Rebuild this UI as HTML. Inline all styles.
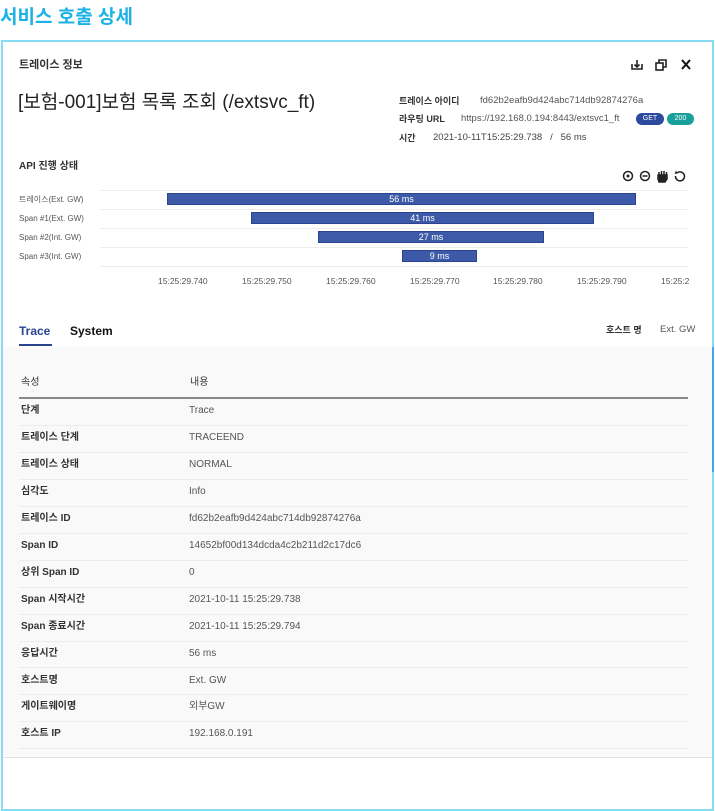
<!DOCTYPE html>
<html><head><meta charset="utf-8">
<style>
*{margin:0;padding:0;box-sizing:border-box}
body{width:715px;height:811px;background:#fff;position:relative;overflow:hidden;font-family:"Liberation Sans","Noto Sans CJK KR",sans-serif;color:#222}
.a{position:absolute;white-space:nowrap}
.k{font-weight:bold;font-size:10px;color:#333;line-height:12px}
.v{font-size:10px;color:#555;line-height:12px}
.row{position:absolute;left:19px;width:669px;height:1px;background:#ececec}
.grid{position:absolute;left:100px;width:588px;height:1px;background:#ececec}
.bar{position:absolute;height:12px;background:#3c5aa8;border:1px solid #2a4490;color:#fff;font-size:9px;text-align:center;line-height:10px}
.lab{font-size:8px;color:#555;line-height:10px}
.ax{font-size:8.5px;color:#555;top:276px}
</style></head><body>
<div class="a" style="left:0;top:2px;font-size:19px;font-weight:bold;color:#1db2e6">서비스 호출 상세</div>
<div class="a" style="left:1px;top:40px;width:713px;height:771px;border:2px solid #86dcf4"></div>
<div class="a" style="left:3px;top:347px;width:709px;height:410px;background:#f9f9f9"></div>
<div class="a" style="left:3px;top:757px;width:709px;height:1px;background:#e2e2e2"></div>
<div class="a" style="left:712px;top:347px;width:2px;height:125px;background:#4aa3e0"></div>

<div class="a k" style="left:19px;top:59px;font-size:11px">트레이스 정보</div>
<svg class="a" style="left:629px;top:58px" width="64" height="14" viewBox="0 0 64 14">
<path d="M3 6v5h10V6M8 2v7M5.5 6.5L8 9l2.5-2.5" fill="none" stroke="#222" stroke-width="1.6"/>
<rect x="27" y="5" width="7" height="7" fill="none" stroke="#222" stroke-width="1.6"/>
<path d="M30 5V2h7v7h-3" fill="none" stroke="#222" stroke-width="1.6"/>
<path d="M53 2l8 9M61 2l-8 9" stroke="#111" stroke-width="2"/>
</svg>
<div class="a" style="left:18px;top:90px;font-size:19px;color:#222;line-height:26px">[보험-001]보험 목록 조회 (/extsvc_ft)</div>
<div class="a k" style="left:399px;top:95px;font-size:9px">트레이스 아이디</div>
<div class="a v" style="left:480px;top:95px;font-size:9.5px">fd62b2eafb9d424abc714db92874276a</div>
<div class="a k" style="left:399px;top:113px;font-size:9px">라우팅 URL</div>
<div class="a v" style="left:461px;top:113px;font-size:9.5px">https://192.168.0.194:8443/extsvc1_ft</div>
<div class="a" style="left:636px;top:113px;width:28px;height:12px;border-radius:6px;background:#2c4a9e;color:#fff;font-size:7px;text-align:center;line-height:12px">GET</div>
<div class="a" style="left:667px;top:113px;width:27px;height:12px;border-radius:6px;background:#1aa09a;color:#fff;font-size:7px;text-align:center;line-height:12px">200</div>
<div class="a k" style="left:399px;top:132px;font-size:9px">시간</div>
<div class="a v" style="left:433px;top:132px;font-size:9.5px;color:#444">2021-10-11T15:25:29.738 &nbsp; / &nbsp; 56 ms</div>

<div class="a k" style="left:19px;top:161px;font-size:10px">API 진행 상태</div>
<svg class="a" style="left:622px;top:169px" width="66" height="14" viewBox="0 0 66 14">
<circle cx="6" cy="7" r="4.5" fill="none" stroke="#222" stroke-width="1.5"/><circle cx="6" cy="7" r="1.5" fill="#222"/>
<circle cx="23" cy="7" r="4.5" fill="none" stroke="#222" stroke-width="1.5"/><path d="M20.5 7h5" stroke="#222" stroke-width="1.5"/>
<path d="M36 6h9v4l-2 3h-6l-1-3z M37 3v4M39.5 2v5M42 2v5M44.5 3v4" fill="#222" stroke="#222" stroke-width="1.5"/>
<path d="M55 4a4.5 4.5 0 1 1-1.5 3" fill="none" stroke="#222" stroke-width="1.5"/><path d="M54 1.5l1.5 3-3 0.5z" fill="#222"/>
</svg>

<div class="grid" style="top:190px"></div><div class="grid" style="top:209px"></div><div class="grid" style="top:228px"></div><div class="grid" style="top:247px"></div><div class="grid" style="top:266px"></div>
<div class="a lab" style="left:19px;top:195px">트레이스(Ext. GW)</div>
<div class="a lab" style="left:19px;top:214px">Span #1(Ext. GW)</div>
<div class="a lab" style="left:19px;top:233px">Span #2(Int. GW)</div>
<div class="a lab" style="left:19px;top:252px">Span #3(Int. GW)</div>
<div class="bar a" style="left:167px;top:193px;width:469px">56 ms</div>
<div class="bar a" style="left:251px;top:212px;width:343px">41 ms</div>
<div class="bar a" style="left:318px;top:231px;width:226px">27 ms</div>
<div class="bar a" style="left:402px;top:250px;width:75px">9 ms</div>
<div class="a ax" style="left:158px">15:25:29.740</div>
<div class="a ax" style="left:242px">15:25:29.750</div>
<div class="a ax" style="left:326px">15:25:29.760</div>
<div class="a ax" style="left:410px">15:25:29.770</div>
<div class="a ax" style="left:493px">15:25:29.780</div>
<div class="a ax" style="left:577px">15:25:29.790</div>
<div class="a ax" style="left:661px">15:25:2</div>

<div class="a" style="left:19px;top:324px;font-size:12px;font-weight:bold;color:#2a4490">Trace</div>
<div class="a" style="left:70px;top:324px;font-size:12px;font-weight:bold;color:#111">System</div>
<div class="a" style="left:19px;top:344px;width:33px;height:2px;background:#2a4490"></div>
<div class="a k" style="left:606px;top:324px;font-size:9px">호스트 명</div>
<div class="a v" style="left:660px;top:324px;font-size:9.5px">Ext. GW</div>

<div class="a v" style="left:21px;top:377px;color:#333">속성</div>
<div class="a v" style="left:190px;top:377px;color:#333">내용</div>
<div class="a" style="left:19px;top:397px;width:669px;height:2px;background:#888"></div>

<div class="a k" style="left:21px;top:405px">단계</div><div class="a v" style="left:189px;top:405px">Trace</div><div class="row" style="top:425px"></div>
<div class="a k" style="left:21px;top:432px">트레이스 단계</div><div class="a v" style="left:189px;top:432px">TRACEEND</div><div class="row" style="top:452px"></div>
<div class="a k" style="left:21px;top:459px">트레이스 상태</div><div class="a v" style="left:189px;top:459px">NORMAL</div><div class="row" style="top:479px"></div>
<div class="a k" style="left:21px;top:486px">심각도</div><div class="a v" style="left:189px;top:486px">Info</div><div class="row" style="top:506px"></div>
<div class="a k" style="left:21px;top:513px">트레이스 ID</div><div class="a v" style="left:189px;top:513px">fd62b2eafb9d424abc714db92874276a</div><div class="row" style="top:533px"></div>
<div class="a k" style="left:21px;top:540px">Span ID</div><div class="a v" style="left:189px;top:540px">14652bf00d134dcda4c2b211d2c17dc6</div><div class="row" style="top:560px"></div>
<div class="a k" style="left:21px;top:567px">상위 Span ID</div><div class="a v" style="left:189px;top:567px">0</div><div class="row" style="top:587px"></div>
<div class="a k" style="left:21px;top:594px">Span 시작시간</div><div class="a v" style="left:189px;top:594px">2021-10-11 15:25:29.738</div><div class="row" style="top:614px"></div>
<div class="a k" style="left:21px;top:621px">Span 종료시간</div><div class="a v" style="left:189px;top:621px">2021-10-11 15:25:29.794</div><div class="row" style="top:641px"></div>
<div class="a k" style="left:21px;top:648px">응답시간</div><div class="a v" style="left:189px;top:648px">56 ms</div><div class="row" style="top:667px"></div>
<div class="a k" style="left:21px;top:675px">호스트명</div><div class="a v" style="left:189px;top:675px">Ext. GW</div><div class="row" style="top:694px"></div>
<div class="a k" style="left:21px;top:701px">게이트웨이명</div><div class="a v" style="left:189px;top:701px">외부GW</div><div class="row" style="top:721px"></div>
<div class="a k" style="left:21px;top:728px">호스트 IP</div><div class="a v" style="left:189px;top:728px">192.168.0.191</div><div class="row" style="top:748px"></div>
</body></html>
